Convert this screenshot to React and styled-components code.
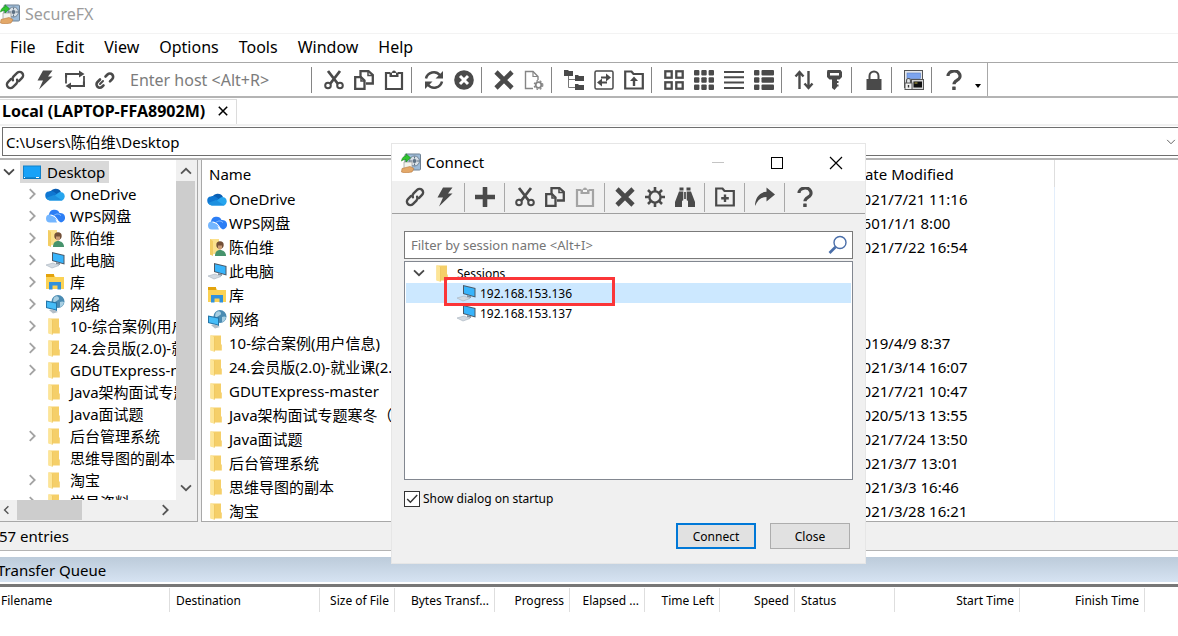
import React from "react";
import styled, { createGlobalStyle } from "styled-components";

const INK = "#4a4a4a";

const GlobalStyle = createGlobalStyle`
  * { box-sizing: border-box; }
  html, body { margin: 0; padding: 0; overflow: hidden; }
  body, button, input, table {
    font-family: "Noto Sans", "Noto Sans CJK SC", sans-serif;
    font-size: 15px;
    color: #000;
  }
  button { border: 0; padding: 0; background: none; }
  svg { display: block; flex: none; }
`;

/* ---------- main window ---------- */

const Window = styled.div`
  position: relative;
  display: flex;
  flex-direction: column;
  height: 100vh;
  background: #fff;
  overflow: hidden;
`;

const TitleBar = styled.header`
  display: flex;
  align-items: center;
  gap: 5px;
  height: 34px;
  padding-bottom: 5px;
  border-bottom: 1px solid #f3f3f3;
  font-size: 16px;
  color: #9c9c9c;
`;

const MenuBar = styled.nav`
  display: flex;
  height: 28px;
  padding-bottom: 2px;
`;

const MenuButton = styled.button`
  padding: 0 10px;
  font-size: 16px;
`;

const ToolStrip = styled.div`
  display: flex;
  height: 36px;
  border-top: 1px solid #a8a8a8;
  border-bottom: 2px solid #b4b4b4;
`;

const ToolBar = styled.div`
  display: flex;
  align-items: center;
  border-right: 1px solid #a8a8a8;
`;

const ToolButton = styled.button`
  display: grid;
  place-items: center;
  width: 30px;
  height: 30px;
  opacity: ${(p) => (p.$dim ? 0.45 : 1)};
`;

const Separator = styled.span`
  width: 1px;
  height: 26px;
  margin: 0 7px 0 2px;
  background: #858585;
`;

const HostInput = styled.input`
  width: 189px;
  padding: 0 10px;
  border: 0;
  outline: 0;
  font-size: 16px;
  &::placeholder { color: #7c7c7c; }
`;

const MoreButton = styled.button`
  display: grid;
  place-items: center;
  width: 18px;
  height: 30px;
  padding-top: 12px;
`;

const TabRow = styled.div`
  display: flex;
  height: 28px;
  padding-top: 1px;
  border-bottom: 2px solid #f1f1f1;
`;

const Tab = styled.div`
  display: flex;
  align-items: center;
  gap: 12px;
  padding: 0 7px 2px 2px;
  border: solid #dcdcdc;
  border-width: 1px 1px 0 0;
  font-size: 16px;
  font-weight: 700;
  line-height: 22px;
`;

const PathRow = styled.div`
  display: flex;
  align-items: center;
  height: 29px;
  margin: 1px 0 2px 2px;
  border: solid #6f6f6f;
  border-width: 1px 0 1px 1px;
`;

const PathInput = styled.input`
  flex: 1;
  min-width: 0;
  height: 25px;
  padding: 0 3px;
  border: 0;
  outline: 0;
`;

const Panels = styled.main`
  display: flex;
  flex: 1;
  min-height: 0;
  gap: 3px;
  border-top: 2px solid #b4b4b4;
  background: #f0f0f0;
`;

const TreePanel = styled.section`
  display: grid;
  grid-template: minmax(0, 1fr) 21px / minmax(0, 1fr) 21px;
  width: 198px;
  border: solid #a8a8a8;
  border-width: 0 1px 1px 0;
`;

const Tree = styled.ul`
  margin: 0;
  padding: 1px 0 0;
  overflow: hidden;
  list-style: none;
  background: #fff;
`;

const TreeRow = styled.li`
  display: flex;
  align-items: center;
  height: 22px;
  padding-left: ${(p) => (p.$root ? 0 : 22)}px;
  line-height: 20px;
  white-space: nowrap;
`;

const Expander = styled.button`
  display: grid;
  place-items: center;
  width: 20px;
  height: 20px;
  padding-right: ${(p) => (p.$root ? 3 : 0)}px;
  flex: none;
`;

const NodeLabel = styled.span`
  display: flex;
  align-items: center;
  gap: 5px;
  height: 22px;
  padding: 0 4px 0 ${(p) => (p.$selected ? 2 : 3)}px;
  background: ${(p) => (p.$selected ? "#d9d9d9" : "none")};
`;

const ScrollV = styled.div`
  display: grid;
  grid-template-rows: 21px minmax(0, 1fr) 40px;
  width: 19px;
  justify-items: center;
`;

const ScrollH = styled.div`
  display: grid;
  grid-template-columns: 17px 65px 1fr 22px;
  align-items: center;
  height: 19px;
`;

const Thumb = styled.span`
  width: 100%;
  height: 100%;
  background: #cdcdcd;
`;

const ArrowCell = styled.button`
  display: grid;
  place-items: center;
  align-self: ${(p) => (p.$end ? "end" : "center")};
  justify-content: ${(p) => (p.$start ? "start" : "center")};
  width: 100%;
  height: ${(p) => (p.$end ? 24 : 20)}px;
`;

const FilePanel = styled.section`
  flex: 1;
  min-width: 0;
  overflow: hidden;
  border: solid #a8a8a8;
  border-width: 0 0 1px 1px;
  background: #fff;
`;

const FileTable = styled.table`
  width: 853px;
  table-layout: fixed;
  border-collapse: separate;
  border-spacing: 0;
  th {
    height: 27px;
    padding: 0 7px;
    text-align: left;
    font-weight: 400;
  }
  td {
    height: 24px;
    padding: 0 5px;
    line-height: 22px;
    white-space: nowrap;
  }
  th:last-child { border-right: 1px solid #dedede; padding-left: 8px; }
  td:last-child { border-right: 1px solid #e3eefb; padding-left: 8px; }
`;

const FileName = styled.span`
  display: flex;
  align-items: center;
  gap: 2px;
`;

const StatusBar = styled.div`
  height: 29px;
  flex: none;
  border-bottom: 1px solid #b4b4b4;
  background: #f0f0f0;
  line-height: 29px;
  text-indent: -1px;
`;

const QueueTitle = styled.h2`
  flex: none;
  height: 25px;
  margin: 6px 0 2px;
  background: linear-gradient(#bccbda, #d6e3f2);
  font-size: 15px;
  font-weight: 400;
  line-height: 27px;
  text-indent: -3px;
`;

const QueuePanel = styled.section`
  flex: none;
  height: 52px;
  border-top: 3px solid #777;
`;

const QueueTable = styled.table`
  width: 1145px;
  margin-top: 1px;
  table-layout: fixed;
  border-collapse: separate;
  border-spacing: 0;
`;

const QueueHead = styled.th`
  width: ${(p) => p.$width}px;
  height: 24px;
  padding: 0 5px 0 ${(p) => (p.$first ? 1 : 6)}px;
  border-right: 1px solid #dedede;
  overflow: hidden;
  white-space: nowrap;
  font-size: 12px;
  font-weight: 400;
  text-align: ${(p) => p.$align};
`;

/* ---------- connect dialog ---------- */

const Dialog = styled.section`
  position: absolute;
  left: 391px;
  top: 143px;
  width: 475px;
  display: flex;
  flex-direction: column;
  border: 1px solid #e6e6e6;
  background: #f0f0f0;
`;

const DialogTitle = styled.header`
  display: flex;
  align-items: center;
  gap: 5px;
  height: 37px;
  padding-left: 9px;
  background: #fff;
`;

const DialogName = styled.h1`
  flex: 1;
  margin: 0;
  padding-bottom: 2px;
  font-size: 15px;
  font-weight: 400;
`;

const Caption = styled.div`
  display: flex;
`;

const CaptionButton = styled.button`
  display: grid;
  place-items: center;
  width: 59px;
  height: 36px;
`;

const DialogTools = styled.div`
  display: flex;
  align-items: center;
  height: 33px;
  padding-left: 8px;
  border-bottom: 1px solid #a0a0a0;
`;

const DialogSeparator = styled.span`
  width: 1px;
  height: 29px;
  margin: 0 5px 0 4px;
  background: #a8a8a8;
`;

const DialogBody = styled.div`
  padding: 17px 12px 14px;
`;

const FilterBox = styled.div`
  display: flex;
  align-items: center;
  height: 28px;
  padding-right: 4px;
  border: 1px solid #7a7a7a;
  background: #fff;
`;

const FilterInput = styled.input`
  flex: 1;
  min-width: 0;
  padding: 0 6px;
  border: 0;
  outline: 0;
  font-size: 13px;
  &::placeholder { color: #757575; }
`;

const SessionTree = styled.ul`
  position: relative;
  height: 219px;
  margin: 2px 0 10px;
  padding: 1px;
  border: 1px solid #828790;
  background: #fff;
  list-style: none;
`;

const SessionRow = styled.li`
  display: flex;
  align-items: center;
  gap: 4px;
  height: 20px;
  padding-left: ${(p) => (p.$leaf ? 50 : 3)}px;
  background: ${(p) => (p.$selected ? "#cce8ff" : "none")};
  font-size: 12px;
  line-height: 20px;
`;

const SessionName = styled.span`
  padding-top: 1px;
`;

const Highlight = styled.span`
  position: absolute;
  left: 39px;
  top: 15px;
  width: 171px;
  height: 29px;
  border: 3px solid #fb3538;
`;

const CheckLabel = styled.label`
  display: flex;
  align-items: center;
  gap: 3px;
  font-size: 12px;
  line-height: 17px;
`;

const CheckWrap = styled.span`
  display: grid;
  > * { grid-area: 1 / 1; }
  svg { pointer-events: none; }
`;

const CheckBox = styled.input`
  appearance: none;
  width: 16px;
  height: 16px;
  margin: 0;
  border: 1px solid #333;
  background: #fff;
`;

const DialogActions = styled.div`
  display: flex;
  justify-content: flex-end;
  gap: 14px;
  margin-top: 16px;
  padding-right: 3px;
`;

const PushButton = styled.button`
  width: 80px;
  height: 26px;
  border: ${(p) => (p.$primary ? "2px solid #0078d7" : "1px solid #adadad")};
  background: #e1e1e1;
  font-size: 12px;
`;

/* ---------- icons ---------- */

const Svg = ({ size = 20, children }) => (
  <svg width={size} height={size} viewBox="0 0 20 20" fill="none" aria-hidden="true">
    {children}
  </svg>
);

const glyphs = {
  link: (
    <g stroke={INK} strokeWidth="2.4" strokeLinecap="round" transform="rotate(-45 10 10)">
      <path d="M8 6.5H3.5a3.5 3.5 0 0 0 0 7H8.500a3.500 3.500 0 0 0 3.200-2.200" />
      <path d="M12 13.500h4.500a3.500 3.500 0 0 0 0-7H11.500a3.500 3.500 0 0 0-3.200 2.200" />
    </g>
  ),
  bolt: <path d="M8 .5h9.500l-4.500 6h4.500L4 19.500 8 10.500H2.500z" fill={INK} />,
  loop: (
    <g>
      <path d="M1 7.500V4h14M19 11.500V16H5" stroke={INK} strokeWidth="2.200" />
      <path d="M14 .5v7L19.500 4zM6 12.500v7L.5 16z" fill={INK} />
      <path d="M1 7v6.500M19 6v6" stroke={INK} strokeWidth="1.800" />
    </g>
  ),
  unlink: (
    <g stroke={INK} strokeWidth="2.600" strokeLinecap="round">
      <path d="M5 9.500 2.500 12a3.300 3.300 0 0 0 0 4.700 3.300 3.300 0 0 0 4.600 0L8.500 15.300" />
      <path d="M10.500 6.500 12.500 4.500a3.300 3.300 0 0 1 4.700 0 3.300 3.300 0 0 1 0 4.600L15 11.300" />
      <path d="M5 14l3-3" strokeWidth="2" />
    </g>
  ),
  cut: (
    <g stroke={INK}>
      <path d="M4 1 14 14M16 1 6 14" strokeWidth="2.800" />
      <circle cx="4" cy="15.500" r="2.800" strokeWidth="2" />
      <circle cx="16" cy="15.500" r="2.800" strokeWidth="2" />
    </g>
  ),
  copy: (
    <g stroke={INK} strokeWidth="2.300">
      <path d="M1.200 7.200H7L10.500 10.500V18.800H1.200z" />
      <path d="M6.500 7V1.200H14.500L18.800 5V13.500H12" />
      <path d="M7 7v4h4M14 1.500V5.500h4" strokeWidth="1.500" />
    </g>
  ),
  paste: (
    <g>
      <path d="M6 3H2v16h16V3h-4" stroke={INK} strokeWidth="2.200" />
      <path d="M5.500 7V2.500H8a2 2 0 0 1 4 0h2.500V7z" fill={INK} />
      <rect x="8" y="3" width="4" height="2" fill="#fff" />
    </g>
  ),
  refresh: (
    <g>
      <path d="M2 8.500a8 8 0 0 1 14-3.300M18 11.500a8 8 0 0 1-14 3.300" stroke={INK} strokeWidth="2.500" />
      <path d="M19 1v7.500h-7.500zM1 19v-7.500h7.500z" fill={INK} />
    </g>
  ),
  stop: (
    <g>
      <circle cx="10" cy="10" r="9.800" fill={INK} />
      <path d="m6 6 8 8M14 6l-8 8" stroke="#fff" strokeWidth="3" />
    </g>
  ),
  remove: <path d="m2 2 16 16M18 2 2 18" stroke={INK} strokeWidth="4.600" />,
  fileGear: (
    <g stroke="#858585">
      <path d="M9 18.500H1.500v-17H9l5 5V10" strokeWidth="1.400" />
      <path d="M9 1.500v5h5" strokeWidth="1.200" />
      <circle cx="14.500" cy="15" r="2.800" strokeWidth="1.800" />
      <circle cx="14.500" cy="15" r="4.300" strokeWidth="1.200" strokeDasharray="1.800 1.700" />
    </g>
  ),
  tree: (
    <g>
      <path d="M0 0h4l1 1h4v5H0zM11 5h3l1 1h5v5h-9zM11 14h3l1 1h5v5h-9z" fill={INK} />
      <path d="M4.500 6v11.500H11M4.500 9.500H11" stroke="#777" />
    </g>
  ),
  sync: (
    <g>
      <rect x="1" y="1" width="18" height="18" rx="1.500" stroke={INK} strokeWidth="1.500" />
      <path d="M7 7.500h6M7 12.500h6" stroke={INK} strokeWidth="2" />
      <path d="M12 3.500v8L17 7.500zM8 8.500v8L3 12.500z" fill={INK} />
    </g>
  ),
  folderUp: (
    <g>
      <path d="M1.200 18.500v-17h6.300l2 2.500h9.300v14.500z" stroke={INK} strokeWidth="2.200" />
      <path d="M10 6.500 14 11H6z" fill={INK} />
      <path d="M10 9v7" stroke={INK} strokeWidth="2.400" />
    </g>
  ),
  bigIcons: (
    <g stroke={INK} strokeWidth="2.300">
      {[1.300, 12.300].map((x) => [1.300, 12.300].map((y) => <rect key={x + "-" + y} x={x} y={y} width="6.400" height="6.400" />))}
    </g>
  ),
  smallIcons: (
    <g fill={INK}>
      {[0, 7.300, 14.600].map((x) => [0, 7.300, 14.600].map((y) => <rect key={x + "-" + y} x={x} y={y} width="5.400" height="5.400" rx="1" />))}
    </g>
  ),
  lines: <path d="M0 2h20M0 7.300h20M0 12.600h20M0 18h20" stroke={INK} strokeWidth="2" />,
  details: (
    <g fill={INK}>
      {[0, 7.300, 14.600].map((y) => (
        <g key={y}>
          <rect y={y} width="5.400" height="5.400" rx="1" />
          <rect x="7.500" y={y} width="12.500" height="5.400" rx="1" />
        </g>
      ))}
    </g>
  ),
  updown: (
    <path d="M5.500 19V2.500M1.500 6.500l4-4.500 4 4.500M14.500 1v16.500M10.500 13.500l4 4.500 4-4.500" stroke={INK} strokeWidth="2.400" />
  ),
  key: (
    <g>
      <path d="M3.500 0h13L18 2v5l-2.500 2.500H13V17l-2.500 3L8 18V9.500H5.500L3 7V2z" fill={INK} />
      <rect x="6" y="3" width="9" height="2.500" fill="#fff" />
      <path d="M11.500 12h3M11.500 15.500h3" stroke={INK} strokeWidth="2" />
    </g>
  ),
  lock: (
    <g>
      <rect x="2.500" y="9" width="15" height="11" fill={INK} />
      <path d="M5.500 9.500V6a4.500 4.500 0 0 1 9 0v3.500" stroke={INK} strokeWidth="2" />
    </g>
  ),
  securecrt: (
    <g>
      <rect x=".5" y=".5" width="18" height="17" fill="#e4e7ea" stroke="#555" />
      <rect x="3" y="3" width="13.500" height="5.500" fill="#7da4ee" stroke="#5d7fc4" strokeWidth=".6" />
      <rect x="7.500" y="9.500" width="12" height="10" fill="#d6d6d6" stroke="#555" />
      <rect x="9.500" y="11.500" width="8.500" height="6" fill="#111" />
      <path d="M10.500 13h3" stroke="#c8b84a" />
      <rect x="1" y="13" width="7" height="6.500" fill="#f1f1f1" stroke="#555" />
      <path d="M2.500 13v-2.500a2 2 0 0 1 4 0V13" stroke="#555" strokeWidth="1.200" />
      <path d="M4.500 15v2.500" stroke="#333" strokeWidth="1.400" />
    </g>
  ),
  help: (
    <g>
      <path d="M4 6a6 5 0 1 1 9 4.300c-2.200 1.200-3 2-3 4" stroke={INK} strokeWidth="3.200" />
      <rect x="8.200" y="16.500" width="3.500" height="3.500" rx=".5" fill={INK} />
    </g>
  ),
  plus: <path d="M10 1v18M1 10h18" stroke={INK} strokeWidth="4.600" strokeLinecap="round" />,
  gear: (
    <g stroke={INK}>
      <circle cx="10" cy="10" r="5.600" strokeWidth="2.400" />
      <path d="M10 0v4M10 16v4M0 10h4M16 10h4M3 3l2.800 2.800M14.200 14.200 17 17M17 3l-2.800 2.800M5.800 14.200 3 17" strokeWidth="2.600" />
    </g>
  ),
  find: (
    <g fill={INK}>
      <path d="M4.500.500h4v3h-4zM11.500.500h4v3h-4zM4 4.500h4.500V13L7 14v6H0v-5zM16 4.500h-4.500V13l1.500 1v6h7v-5z" />
      <path d="M8.800 5h2.400v7H8.800z" />
      <path d="M8.700 4v9M11.300 4v9" stroke="#ddd" strokeWidth=".8" />
    </g>
  ),
  folderPlus: (
    <g stroke={INK}>
      <path d="M1.200 18.500v-17h6.300l2 2.500h9.300v14.500z" strokeWidth="2.200" />
      <path d="M10 7.500v7.500M6.200 11.300h7.600" strokeWidth="2.400" />
    </g>
  ),
  share: <path d="M11.500 .5 20 7.500l-8.500 7V10C6 10 2.500 13 0 19 0 11 4.500 5 11.500 4.800z" fill={INK} />,
};

const AppIcon = () => (
  <Svg>
    <rect x="4" y="1" width="15.500" height="16" rx="1" fill="#9dbbd8" stroke="#6f8193" />
    <circle cx="13.500" cy="8" r="5" fill="#d9e0e6" stroke="#718497" />
    <circle cx="13.500" cy="8" r="2" fill="#5d7083" />
    <path d="M13.500 3.500v2M13.500 10.500v2M9 8h2M16 8h2" stroke="#5d7083" />
    <path d="M3 9h8v7H3z" fill="#f3f3ee" stroke="#999" strokeWidth=".7" />
    <path d="M1 15.500 9 13.500l4 2-2 3.500-7 1-3.500-1z" fill="#e3a869" stroke="#b9783e" strokeWidth=".6" />
    <path d="M.5 8C1 4.500 3 3 5 3V.8l4.500 4L5 9V6.500C3 6.500 2 7 .5 8z" fill="#2fc52f" stroke="#178a1a" strokeWidth=".6" />
  </Svg>
);

const nodeIcons = {
  desktop: (
    <g>
      <rect x="1.500" y="4" width="17" height="12.500" fill="#18a2f8" stroke="#1180c8" />
      <path d="M2 16h16" stroke="#0a6cae" />
      <path d="M2 15.500h1M14 15.500h3" stroke="#fff" />
    </g>
  ),
  onedrive: (
    <g>
      <path d="M5 9a6 6 0 0 1 11-1l-6 5H3z" fill="#0a5fb4" />
      <path d="M4.500 15.500a4 4 0 0 1-.5-8c2-.8 4-.3 5.500.8l7 5-3 2.200z" fill="#0f77d2" />
      <path d="M4 16.500 13 9a4.300 4.300 0 0 1 4.500-.5c3 1.500 3 6.500-.5 8z" fill="#27a5ee" />
      <path d="m9 11 8.500 5.500H4.500A4 4 0 0 1 1 14z" fill="#1d90df" />
    </g>
  ),
  wps: (
    <g>
      <path d="M4 9a5.500 5.500 0 0 1 10.500-2A4.800 4.800 0 0 1 16 16.500z" fill="#2c7ef5" />
      <path d="M5 16.500A4 4 0 0 1 5 8.500c3 0 5 3 7 8z" fill="#74b6ff" />
      <path d="M5.500 9c3 0 6 3 8 7" stroke="#fff" strokeWidth="1.100" />
      <path d="M9 9.500c2-2 5-2 7 .2" stroke="#8ec2ff" strokeWidth="1" />
    </g>
  ),
  user: (
    <g>
      <path d="M3 2h9v14l-9 2z" fill="#fbe08c" />
      <path d="M3 2l3 2v15l-3-1.500z" fill="#f3cd63" />
      <circle cx="13" cy="8" r="3.700" fill="#735038" />
      <path d="M11 8.500h4v3l-2 1.500-2-1.500z" fill="#c99b76" />
      <path d="M8 19c0-4 2-6 5-6s6 2 6 6z" fill="#46936c" />
    </g>
  ),
  computer: (
    <g>
      <path d="m7 2 12.500 3v9.500L7 11z" fill="#4a5866" />
      <path d="m8 3.300 10.500 2.500v7.400L8 10.200z" fill="#38b4fb" />
      <path d="m11 12 4 1.200V15l-4-1z" fill="#82909d" />
      <path d="m1 15 7-2 6 2.500L7 18z" fill="#d3dae1" stroke="#a6b2bd" strokeWidth=".6" />
    </g>
  ),
  library: (
    <g>
      <path d="M1 3h8l1.500 2H19v12H1z" fill="#fbd255" />
      <path d="M1 2h8v3H1z" fill="#e3a30d" />
      <path d="M4 17.500V10h12v7.500h-3.500v-4h-5v4z" fill="#3191dc" />
    </g>
  ),
  network: (
    <g>
      <circle cx="13" cy="7.500" r="6.500" fill="#4a8bb2" />
      <path d="M9 3.500c3-2.500 5-1 5 1s-3 2-4 4-3-1-1-5zM15 8c2-1 3-.5 4 0-.5 3-2 4.500-4 5z" fill="#a8cfe2" />
      <path d="m1 6.500 11 2V17L1 14z" fill="#2475a8" />
      <path d="m2 7.700 9 1.700v6.200L2 13.300z" fill="#46bdf8" />
      <path d="m4 16 4-.5 5 2.500-5 1.500z" fill="#b3bec7" />
    </g>
  ),
  folder: (
    <g>
      <path d="M3.500 2.500H14V11l.8 1v5.500H3.500z" fill="#f5cf69" />
      <path d="M3.500 2 7.500 4v15l-4-1.800z" fill="#fde596" />
      <path d="M7.500 4v14.500" stroke="#e9bd50" strokeWidth=".6" />
    </g>
  ),
};

const NodeIcon = ({ name }) => <Svg>{nodeIcons[name]}</Svg>;

const chevronPaths = {
  down: "m4.500 7 5.500 5.500L15.500 7",
  up: "m4.500 13 5.500-5.500 5.500 5.500",
  left: "m12 4.500-5.500 5.500 5.500 5.500",
  right: "m7.500 4.500 5.500 5.500-5.500 5.500",
};

const Chevron = ({ dir, color = "#484848", width = 2, size = 18 }) => (
  <Svg size={size}>
    <path d={chevronPaths[dir]} stroke={color} strokeWidth={width} />
  </Svg>
);

/* ---------- data ---------- */

const menus = ["File", "Edit", "View", "Options", "Tools", "Window", "Help"];

const quickTools = [["link", "Connect"], ["bolt", "Quick connect"], ["loop", "Reconnect"], ["unlink", "Disconnect"]];

const toolGroups = [
  [["cut", "Cut"], ["copy", "Copy"], ["paste", "Paste"]],
  [["refresh", "Refresh"], ["stop", "Stop"]],
  [["remove", "Delete"], ["fileGear", "Properties"]],
  [["tree", "Folder tree"], ["sync", "Synchronize"], ["folderUp", "Up one level"]],
  [["bigIcons", "Large icons"], ["smallIcons", "Small icons"], ["lines", "List"], ["details", "Details"]],
  [["updown", "Transfer"], ["key", "Key"]],
  [["lock", "Lock"]],
  [["securecrt", "SecureCRT"]],
  [["help", "Help"]],
];

const dialogGroups = [
  [["link", "Connect"], ["bolt", "Quick connect"]],
  [["plus", "New session"]],
  [["cut", "Cut"], ["copy", "Copy"], ["paste", "Paste", true]],
  [["remove", "Delete"], ["gear", "Properties"], ["find", "Find"]],
  [["folderPlus", "New folder"]],
  [["share", "Shortcut"]],
  [["help", "Help"]],
];

const treeNodes = [
  ["OneDrive", "onedrive", true],
  ["WPS网盘", "wps", true],
  ["陈伯维", "user", true],
  ["此电脑", "computer", true],
  ["库", "library", true],
  ["网络", "network", true],
  ["10-综合案例(用户信息)", "folder", true],
  ["24.会员版(2.0)-就业课", "folder", true],
  ["GDUTExpress-master", "folder", true],
  ["Java架构面试专题寒冬", "folder", false],
  ["Java面试题", "folder", false],
  ["后台管理系统", "folder", true],
  ["思维导图的副本", "folder", false],
  ["淘宝", "folder", true],
  ["学员资料", "folder", true],
];

const files = [
  ["OneDrive", "onedrive", "2021/7/21 11:16"],
  ["WPS网盘", "wps", "1601/1/1 8:00"],
  ["陈伯维", "user", "2021/7/22 16:54"],
  ["此电脑", "computer", ""],
  ["库", "library", ""],
  ["网络", "network", ""],
  ["10-综合案例(用户信息)", "folder", "2019/4/9 8:37"],
  ["24.会员版(2.0)-就业课(2.0)", "folder", "2021/3/14 16:07"],
  ["GDUTExpress-master", "folder", "2021/7/21 10:47"],
  ["Java架构面试专题寒冬（", "folder", "2020/5/13 13:55"],
  ["Java面试题", "folder", "2021/7/24 13:50"],
  ["后台管理系统", "folder", "2021/3/7 13:01"],
  ["思维导图的副本", "folder", "2021/3/3 16:46"],
  ["淘宝", "folder", "2021/3/28 16:21"],
];

const queueColumns = [
  ["Filename", 170, "left"],
  ["Destination", 150, "left"],
  ["Size of File", 75, "right"],
  ["Bytes Transf...", 100, "right"],
  ["Progress", 75, "right"],
  ["Elapsed ...", 75, "right"],
  ["Time Left", 75, "right"],
  ["Speed", 75, "right"],
  ["Status", 100, "left"],
  ["Start Time", 125, "right"],
  ["Finish Time", 125, "right"],
];

/* ---------- parts ---------- */

const Tools = ({ items }) =>
  items.map(([icon, label, dim]) => (
    <ToolButton key={icon} type="button" aria-label={label} $dim={dim}>
      <Svg>{glyphs[icon]}</Svg>
    </ToolButton>
  ));

const ConnectDialog = () => (
  <Dialog role="dialog" aria-labelledby="connect-title">
    <DialogTitle>
      <AppIcon />
      <DialogName id="connect-title">Connect</DialogName>
      <Caption>
        <CaptionButton type="button" aria-label="Minimize">
          <Svg><path d="M4 9.500h12" stroke="#c4c4c4" /></Svg>
        </CaptionButton>
        <CaptionButton type="button" aria-label="Maximize">
          <Svg><rect x="4.500" y="4.500" width="11" height="11" stroke="#000" /></Svg>
        </CaptionButton>
        <CaptionButton type="button" aria-label="Close window">
          <Svg><path d="m4 4 12 12M16 4 4 16" stroke="#000" strokeWidth="1.200" /></Svg>
        </CaptionButton>
      </Caption>
    </DialogTitle>
    <DialogTools>
      {dialogGroups.map((items, i) => (
        <React.Fragment key={i}>
          {i > 0 && <DialogSeparator />}
          <Tools items={items} />
        </React.Fragment>
      ))}
    </DialogTools>
    <DialogBody>
      <FilterBox>
        <FilterInput aria-label="Filter by session name" placeholder="Filter by session name <Alt+I>" />
        <Svg>
          <circle cx="12" cy="7.500" r="6" stroke="#4a6ea9" strokeWidth="1.400" />
          <path d="m7.500 12-6 6" stroke="#4a6ea9" strokeWidth="2.600" />
        </Svg>
      </FilterBox>
      <SessionTree>
        <SessionRow>
          <Expander type="button" aria-label="Collapse Sessions">
            <Chevron dir="down" />
          </Expander>
          <NodeIcon name="folder" />
          <SessionName>Sessions</SessionName>
        </SessionRow>
        <SessionRow $leaf $selected>
          <NodeIcon name="computer" />
          <SessionName>192.168.153.136</SessionName>
        </SessionRow>
        <SessionRow $leaf>
          <NodeIcon name="computer" />
          <SessionName>192.168.153.137</SessionName>
        </SessionRow>
        <Highlight />
      </SessionTree>
      <CheckLabel>
        <CheckWrap>
          <CheckBox type="checkbox" defaultChecked />
          <Svg size={16}><path d="m4 10 4 4 8.500-9" stroke="#333" strokeWidth="1.800" /></Svg>
        </CheckWrap>
        Show dialog on startup
      </CheckLabel>
      <DialogActions>
        <PushButton type="button" $primary>Connect</PushButton>
        <PushButton type="button">Close</PushButton>
      </DialogActions>
    </DialogBody>
  </Dialog>
);

export default function App() {
  return (
    <>
      <GlobalStyle />
      <Window>
        <TitleBar><AppIcon />SecureFX</TitleBar>
        <MenuBar>
          {menus.map((m) => <MenuButton key={m} type="button">{m}</MenuButton>)}
        </MenuBar>
        <ToolStrip>
          <ToolBar>
            <Tools items={quickTools} />
            <HostInput aria-label="Host" placeholder="Enter host <Alt+R>" />
            {toolGroups.map((items, i) => (
              <React.Fragment key={i}>
                <Separator />
                <Tools items={items} />
              </React.Fragment>
            ))}
            <MoreButton type="button" aria-label="More tools">
              <svg width="6" height="4" viewBox="0 0 6 4"><path d="M0 0h6L3 4z" fill="#000" /></svg>
            </MoreButton>
          </ToolBar>
        </ToolStrip>
        <TabRow>
          <Tab>
            Local (LAPTOP-FFA8902M)
            <button type="button" aria-label="Close tab">
              <Svg size={12}><path d="m3 3 14 14M17 3 3 17" stroke="#000" strokeWidth="2.600" /></Svg>
            </button>
          </Tab>
        </TabRow>
        <PathRow>
          <PathInput aria-label="Local path" defaultValue="C:\Users\陈伯维\Desktop" />
          <button type="button" aria-label="Show paths"><Chevron dir="down" width={1.2} size={14} /></button>
        </PathRow>
        <Panels>
          <TreePanel>
            <Tree>
              <TreeRow $root>
                <Expander type="button" aria-label="Collapse Desktop" $root>
                  <Chevron dir="down" />
                </Expander>
                <NodeLabel $selected><NodeIcon name="desktop" />Desktop</NodeLabel>
              </TreeRow>
              {treeNodes.map(([name, icon, open]) => (
                <TreeRow key={name}>
                  <Expander as={open ? "button" : "span"} aria-label={open ? "Expand " + name : undefined}>
                    {open && <Chevron dir="right" color="#a3a3a3" />}
                  </Expander>
                  <NodeLabel><NodeIcon name={icon} />{name}</NodeLabel>
                </TreeRow>
              ))}
            </Tree>
            <ScrollV>
              <ArrowCell type="button" aria-label="Scroll up"><Chevron dir="up" color="#555" /></ArrowCell>
              <Thumb />
              <ArrowCell type="button" aria-label="Scroll down" $end><Chevron dir="down" color="#555" /></ArrowCell>
            </ScrollV>
            <ScrollH>
              <ArrowCell type="button" aria-label="Scroll left" $start><Chevron dir="left" color="#555" size={14} /></ArrowCell>
              <Thumb />
              <span />
              <ArrowCell type="button" aria-label="Scroll right"><Chevron dir="right" color="#555" /></ArrowCell>
            </ScrollH>
          </TreePanel>
          <FilePanel>
            <FileTable>
              <colgroup><col style={{ width: 644 }} /><col /></colgroup>
              <thead><tr><th>Name</th><th>Date Modified</th></tr></thead>
              <tbody>
                {files.map(([name, icon, date]) => (
                  <tr key={name}>
                    <td><FileName><NodeIcon name={icon} />{name}</FileName></td>
                    <td>{date}</td>
                  </tr>
                ))}
              </tbody>
            </FileTable>
          </FilePanel>
        </Panels>
        <StatusBar>57 entries</StatusBar>
        <QueueTitle>Transfer Queue</QueueTitle>
        <QueuePanel>
          <QueueTable>
            <thead>
              <tr>
                {queueColumns.map(([label, width, align], i) => (
                  <QueueHead key={label} $width={width} $align={align} $first={i === 0}>{label}</QueueHead>
                ))}
              </tr>
            </thead>
          </QueueTable>
        </QueuePanel>
        <ConnectDialog />
      </Window>
    </>
  );
}
